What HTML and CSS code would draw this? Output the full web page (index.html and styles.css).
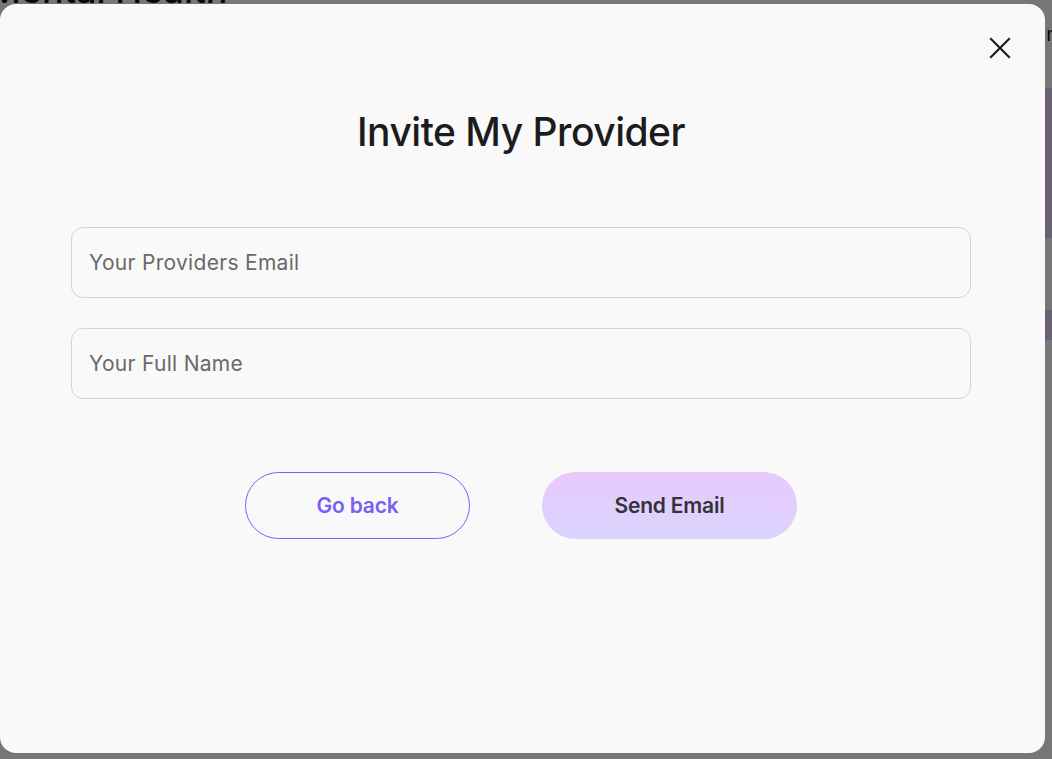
FILE: index.html
```html
<!DOCTYPE html>
<html lang="en">
<head>
<meta charset="utf-8">
<title>Invite My Provider</title>
<link rel="stylesheet" href="styles.css">
</head>
<body>
<div class="page">
  <header class="page-header">
    <h1 class="brand">Mental Health</h1>
    <span class="signin">Sign in</span>
  </header>
  <aside class="side">
    <div class="side-card tall"></div>
    <div class="side-card short"></div>
  </aside>
</div>
<div class="overlay"></div>
<div class="modal" role="dialog" aria-labelledby="modal-title">
  <button class="close" aria-label="Close">
    <svg width="22" height="22" viewBox="0 0 22 22" fill="none" stroke="#1c1c1c" stroke-width="2.2" stroke-linecap="square"><path d="M2 2L20 20M20 2L2 20"/></svg>
  </button>
  <h2 class="title" id="modal-title">Invite My Provider</h2>
  <form class="form">
    <input class="field" type="email" placeholder="Your Providers Email">
    <input class="field" type="text" placeholder="Your Full Name">
    <div class="actions">
      <button type="button" class="btn btn-outline">Go back</button>
      <button type="button" class="btn btn-fill">Send Email</button>
    </div>
  </form>
</div>
</body>
</html>
```
FILE: styles.css
```css
* { box-sizing: border-box; }
html, body { margin: 0; height: 100%; }
body {
  font-family: Inter, "Noto Sans", sans-serif;
  background: #ffffff;
  overflow: hidden;
}
.page { position: relative; height: 100%; }
.page-header {
  display: flex;
  justify-content: space-between;
  align-items: flex-start;
}
.brand {
  margin: -25px 0 0 -12px;
  font-size: 36px;
  font-weight: 500;
  line-height: 30px;
  color: #111;
}
.signin {
  margin: 22px -6px 0 0;
  font-size: 20px;
  color: #111;
}
.side {
  position: absolute;
  top: 88px;
  left: 1044px;
  width: 200px;
  display: flex;
  flex-direction: column;
  gap: 72px;
}
.side-card { background: #e0d2fb; }
.side-card.tall { height: 150px; }
.side-card.short { height: 30px; }
.overlay {
  position: fixed;
  inset: 0;
  background: rgba(0, 0, 0, 0.535);
}
.modal {
  position: fixed;
  left: 0;
  top: 4px;
  width: 1045px;
  height: 749px;
  background: #f9f9f9;
  border-radius: 16px;
  padding: 104px 74px 0 71px;
  display: flex;
  flex-direction: column;
  align-items: center;
}
.close {
  position: absolute;
  top: 33px;
  right: 34px;
  width: 22px;
  height: 22px;
  padding: 0;
  border: 0;
  background: none;
  display: flex;
}
.title {
  margin: 0;
  font-size: 39px;
  line-height: 48px;
  font-weight: 500;
  color: #1c1c1e;
  letter-spacing: -0.5px;
}
.form {
  margin-top: 71px;
  width: 900px;
  display: flex;
  flex-direction: column;
  gap: 30px;
}
.field {
  height: 71px;
  width: 100%;
  border: 1.5px solid #d4d4d4;
  border-radius: 12px;
  background: #f9f9f9;
  padding: 0 17px;
  font-family: inherit;
  font-size: 21px;
  letter-spacing: 0.3px;
  color: #333;
  outline: none;
}
.field::placeholder { color: #696969; }
.actions {
  margin-top: 43px;
  display: flex;
  justify-content: center;
  gap: 72px;
}
.btn {
  height: 67px;
  border-radius: 34px;
  font-family: inherit;
  font-size: 21px;
  font-weight: 600;
  letter-spacing: -0.2px;
  cursor: pointer;
}
.btn-outline {
  width: 225px;
  background: transparent;
  border: 1.5px solid #7b62f6;
  color: #7b5ff5;
}
.btn-fill {
  width: 255px;
  border: 0;
  background: linear-gradient(180deg, #e8c9fc 0%, #dcd3fe 100%);
  color: #333237;
}
```
